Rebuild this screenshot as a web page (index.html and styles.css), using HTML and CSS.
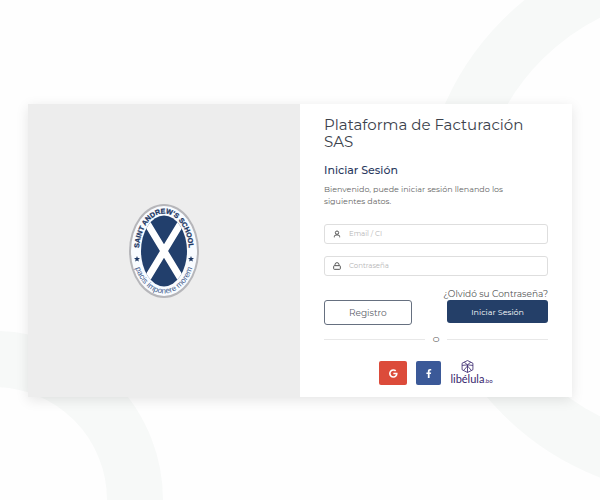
FILE: index.html
```html
<!DOCTYPE html>
<html lang="es">
<head>
<meta charset="utf-8">
<meta name="viewport" content="width=device-width, initial-scale=1">
<title>Plataforma de Facturación SAS</title>
<link rel="stylesheet" href="styles.css">
</head>
<body>
<svg class="rings rings-left" viewBox="0 0 170 170" aria-hidden="true"><circle cx="-6" cy="170" r="141"/></svg>
<svg class="rings rings-right" viewBox="0 0 180 500" aria-hidden="true"><circle cx="280" cy="217" r="251"/></svg>
<main class="card">
  <section class="brand">
    <svg class="crest" viewBox="0 0 76 98" role="img" aria-label="Saint Andrew's School">
      <defs>
        <path id="arc-top" d="M13 49A25 37.500 0 0 1 63 49"/>
        <path id="arc-bottom" d="M7 49A31 42.500 0 0 0 69 49"/>
        <clipPath id="shield"><ellipse cx="38" cy="49" rx="23" ry="35.500"/></clipPath>
      </defs>
      <ellipse class="crest-shadow" cx="38" cy="49" rx="35" ry="47"/>
      <ellipse class="crest-edge" cx="38" cy="49" rx="33" ry="45"/>
      <ellipse class="crest-field" cx="38" cy="49" rx="23" ry="35.500"/>
      <path class="crest-cross" clip-path="url(#shield)" d="M18 16L58 82M58 16L18 82"/>
      <text class="crest-name"><textPath href="#arc-top" startOffset="50%">SAINT ANDREW'S SCHOOL</textPath></text>
      <text class="crest-motto"><textPath href="#arc-bottom" startOffset="50%">pacis imponere morem</textPath></text>
      <path class="crest-star" d="M11 54l.8 2 2.200.1-1.700 1.400.6 2.100-1.900-1.200-1.900 1.200.6-2.100L8 56.100l2.200-.1zM65 54l.8 2 2.200.1-1.700 1.400.6 2.100-1.900-1.200-1.900 1.200.6-2.100-1.700-1.400 2.200-.1z"/>
    </svg>
  </section>
  <section class="panel">
    <h1>Plataforma de Facturación SAS</h1>
    <h2>Iniciar Sesión</h2>
    <p class="intro">Bienvenido, puede iniciar sesión llenando los siguientes datos.</p>
    <form>
      <div class="field">
        <label for="user" aria-label="Email / CI"><svg viewBox="0 0 24 24"><path d="M20 22v-2a5 5 0 0 0-5-5H9a5 5 0 0 0-5 5v2"/><circle cx="12" cy="8" r="5"/></svg></label>
        <input id="user" type="text" placeholder="Email / CI">
      </div>
      <div class="field">
        <label for="password" aria-label="Contraseña"><svg viewBox="0 0 24 24"><rect x="2" y="11" width="20" height="11" rx="2"/><path d="M6 11V8a6 6 0 0 1 12 0v3"/></svg></label>
        <input id="password" type="password" placeholder="Contraseña">
      </div>
      <a class="forgot" href="#">¿Olvidó su Contraseña?</a>
      <div class="actions">
        <button class="btn register" type="button">Registro</button>
        <button class="btn login" type="submit">Iniciar Sesión</button>
      </div>
    </form>
    <div class="divider">O</div>
    <div class="social">
      <a class="social-link google" href="#" aria-label="Google"><svg viewBox="0 0 488 512"><path d="M488 261.800C488 403.300 391.100 504 248 504 110.800 504 0 393.200 0 256S110.800 8 248 8c66.800 0 123 24.500 166.300 64.900l-67.500 64.900C258.500 52.600 94.300 116.600 94.300 256c0 86.500 69.100 156.600 153.700 156.600 98.200 0 135-70.400 140.800-106.900H248v-85.300h236.100c2.300 12.700 3.900 24.900 3.900 41.400z"/></svg></a>
      <a class="social-link facebook" href="#" aria-label="Facebook"><svg viewBox="0 0 320 512"><path d="M279 288l14-92.700h-89v-60c0-25.300 12.500-50 52.500-50H297V6.500S260 0 225 0c-73 0-121 44.400-121 124.700v70.600H23V288h81v224h100V288z"/></svg></a>
      <a class="libelula" href="#">
        <svg viewBox="0 0 24 24" aria-hidden="true"><path d="M12 1l10 5v12l-10 5-10-5V6zM6 4l6 5 6-5M2 10l10-1 10 1M12 9v14M5 19l7-8 7 8"/></svg>
        <span class="wordmark">libélula<small>.bo</small></span>
      </a>
    </div>
  </section>
</main>
</body>
</html>
```
FILE: styles.css
```css
* { box-sizing: border-box; }

body {
  margin: 0;
  min-height: 100vh;
  display: flex;
  align-items: center;
  justify-content: center;
  padding: 1px 28px 0;
  overflow: hidden;
  background: #fefefe;
  color: #626262;
  font-family: Montserrat, Inter, "Open Sans", sans-serif;
}

.rings {
  position: absolute;
  z-index: -1;
  fill: none;
  stroke: #f7f9f8;
  stroke-width: 56;
}
.rings-left { left: 0; bottom: 0; width: 170px; }
.rings-right { right: 0; top: 0; width: 180px; }

.card {
  flex: 1;
  display: grid;
  grid-template-columns: 1fr 1fr;
  background: #fff;
  box-shadow: 0 3px 12px rgba(0, 0, 0, 0.1);
}

.brand {
  display: flex;
  align-items: center;
  justify-content: center;
  background: #ededed;
}
.crest { width: 76px; }
.crest-shadow { fill: #b6b6ba; }
.crest-edge { fill: #f8fbff; }
.crest-field { fill: #223f6c; }
.crest-cross { stroke: #fff; stroke-width: 7; }
.crest text { text-anchor: middle; }
.crest-name { font: bold 7px "Liberation Sans", sans-serif; fill: #1c3764; stroke: #1c3764; stroke-width: 0.3px; }
.crest-motto { font: 8px "Liberation Sans", sans-serif; fill: #45608c; }
.crest-star { fill: #1c3764; }

.panel { padding: 12px 24px 11px; }

h1, h2 { margin: 0; font-weight: 500; }
h1 { font-size: 15px; line-height: 17px; font-weight: 400; color: #3c424c; }
h2 { margin-top: 12px; font-size: 11px; line-height: 16px; color: #2b3a5e; }
.intro { margin: 5px 0 17px; padding-right: 24px; font-size: 8px; line-height: 12px; color: #666; }

.field {
  display: flex;
  align-items: center;
  height: 20px;
  margin-bottom: 12px;
  border: 1px solid #dedede;
  border-radius: 3px;
}
.field label { display: flex; padding: 0 8px; }
.field svg {
  width: 8px;
  height: 8px;
  fill: none;
  stroke: #555;
  stroke-width: 3;
}
.field input {
  flex: 1;
  min-width: 0;
  padding: 0;
  border: 0;
  outline: 0;
  background: none;
  font: 7px/12px Montserrat, Inter, sans-serif;
}
.field input::placeholder { color: #b5b5b5; opacity: 1; }

.forgot {
  display: block;
  text-align: right;
  font-size: 9px;
  line-height: 12px;
  color: #555;
  text-decoration: none;
}

.actions { display: flex; justify-content: space-between; align-items: flex-start; }
.btn { padding: 0 24px; border-radius: 3px; font-family: inherit; white-space: nowrap; }
.register { height: 25px; border: 1px solid #667080; background: #fff; color: #5a6069; font-size: 9px; }
.login { height: 23px; border: 0; background: #243f68; color: #fff; font-size: 8px; }

.divider {
  display: flex;
  align-items: center;
  gap: 8px;
  margin: 8px 0 15px;
  font-size: 8px;
  line-height: 12px;
}
.divider::before, .divider::after { content: ""; flex: 1; height: 1px; background: #e8e8e8; }

.social { display: flex; justify-content: center; align-items: center; gap: 9px; }
.social-link {
  display: flex;
  align-items: center;
  justify-content: center;
  height: 24px;
  border-radius: 2px;
}
.social-link svg { height: 9px; fill: #fff; }
.google { width: 28px; background: #dc4b3a; }
.facebook { width: 25px; background: #3b5998; }

.libelula {
  display: flex;
  flex-direction: column;
  align-items: center;
  color: #36256d;
  text-decoration: none;
}
.libelula svg { width: 13px; height: 13px; margin-right: 9px; fill: none; stroke: currentColor; stroke-width: 1.5; }
.wordmark { font: 11px/11px Lato, sans-serif; }
.wordmark small { font-size: 6px; }
```
